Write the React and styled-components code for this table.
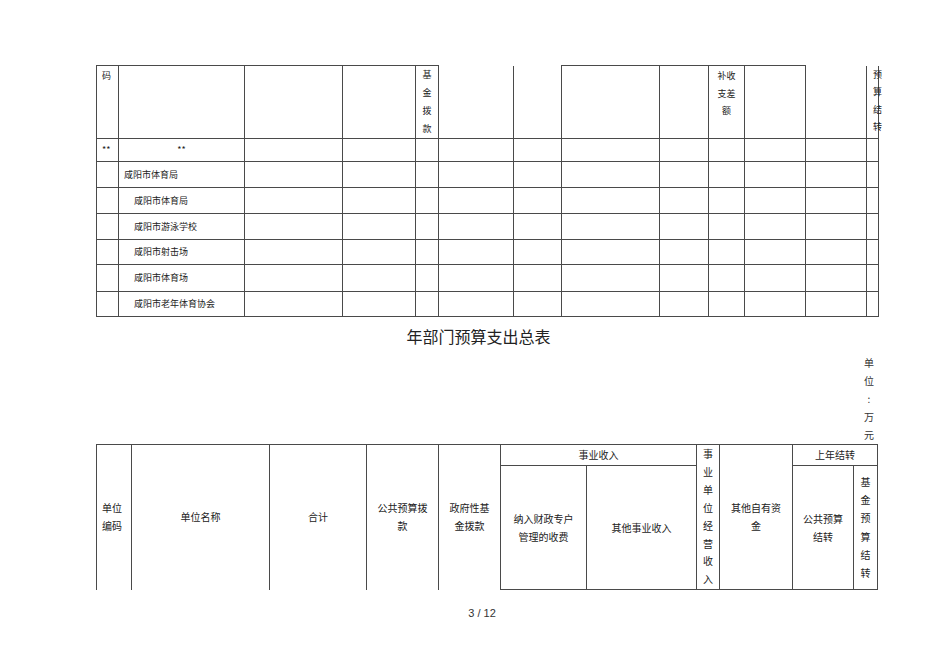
import React from "react";
import styled, { createGlobalStyle } from "styled-components";

const GlobalStyle = createGlobalStyle`
  html, body {
    margin: 0;
    padding: 0;
    background: #fff;
  }
  body {
    font-family: "Noto Sans CJK SC", "Liberation Sans", sans-serif;
    color: #222;
  }
`;

//page layout
const Page = styled.div`
  width: 950px;
  height: 672px;
  box-sizing: border-box;
  padding: 65px 0 0 96px;
  background: #fff;
`;

const Content = styled.div`
  width: 782px;
  display: flex;
  flex-direction: column;
`;

//tables
const Sheet = styled.table`
  border-collapse: collapse;
  table-layout: fixed;
  width: ${(p) => p.$w}px;
  font-size: ${(p) => p.$size}px;
  color: #222;
`;

const Col = styled.col`
  width: ${(p) => p.$w}px;
`;

const Row = styled.tr`
  height: ${(p) => p.$h}px;
`;

const Cell = styled.td`
  border: 1px solid #4a4a4a;
  border-top: ${(p) => (p.$noTop ? "none" : "1px solid #4a4a4a")};
  border-bottom: ${(p) => (p.$noBottom ? "none" : "1px solid #4a4a4a")};
  padding: ${(p) => p.$pad || "0"};
  text-align: ${(p) => p.$align || "center"};
  vertical-align: ${(p) => p.$valign || "middle"};
  line-height: ${(p) => p.$lh || 18}px;
  white-space: nowrap;
  overflow: visible;
`;

const Title = styled.div`
  margin-top: 9px;
  padding-right: 17px;
  text-align: center;
  font-size: 16px;
  line-height: 20px;
  color: #222;
`;

const Unit = styled.div`
  margin-top: 8px;
  margin-left: 768px;
  width: 10px;
  font-size: 10px;
  line-height: 18px;
  text-align: center;
  color: #333;
`;

const PageNo = styled.div`
  margin-top: 16px;
  padding-right: 10px;
  text-align: center;
  font-family: "Liberation Sans", sans-serif;
  font-size: 11px;
  line-height: 14px;
  color: #333;
`;

const stack = (text) =>
  text.split("").map((ch, i) => (
    <React.Fragment key={i}>
      {i > 0 && <br />}
      {ch}
    </React.Fragment>
  ));

const topCols = [22, 126, 98, 73, 23, 75, 48, 98, 49, 36, 61, 61, 12];
const bottomCols = [35, 138, 97, 72, 62, 86, 110, 23, 73, 61, 24];

const units = [
  { name: "咸阳市体育局", pad: "0 0 0 5px", h: 26 },
  { name: "咸阳市体育局", pad: "0 0 0 15px", h: 26 },
  { name: "咸阳市游泳学校", pad: "0 0 0 15px", h: 26 },
  { name: "咸阳市射击场", pad: "0 0 0 15px", h: 25 },
  { name: "咸阳市体育场", pad: "0 0 0 15px", h: 27 },
  { name: "咸阳市老年体育协会", pad: "0 0 0 15px", h: 25 },
];

function TopTable() {
  return (
    <Sheet $w={782} $size={9}>
      <colgroup>
        {topCols.map((w, i) => (
          <Col key={i} $w={w} />
        ))}
      </colgroup>
      <tbody>
        <Row $h={73}>
          <Cell $align="left" $valign="top" $pad="1px 0 0 5px">
            码
          </Cell>
          <Cell />
          <Cell />
          <Cell />
          <Cell $valign="top" $lh={18}>
            {stack("基金拨款")}
          </Cell>
          <Cell $noTop />
          <Cell $noTop />
          <Cell />
          <Cell />
          <Cell $valign="top" $pad="1px 0 0 0" $lh={17.5}>
            补收
            <br />
            支差
            <br />额
          </Cell>
          <Cell />
          <Cell $noTop />
          <Cell $noTop $valign="top" $align="left" $pad="0 0 0 6px" $lh={17.5}>
            {stack("预算结转")}
          </Cell>
        </Row>
        <Row $h={23}>
          <Cell $align="left" $pad="0 0 0 5px">
            **
          </Cell>
          <Cell>**</Cell>
          {topCols.slice(2).map((_, i) => (
            <Cell key={i} />
          ))}
        </Row>
        {units.map((u, r) => (
          <Row key={r} $h={u.h}>
            <Cell />
            <Cell $align="left" $pad={u.pad}>
              {u.name}
            </Cell>
            {topCols.slice(2).map((_, i) => (
              <Cell key={i} />
            ))}
          </Row>
        ))}
      </tbody>
    </Sheet>
  );
}

function BottomTable() {
  return (
    <Sheet $w={781} $size={10}>
      <colgroup>
        {bottomCols.map((w, i) => (
          <Col key={i} $w={w} />
        ))}
      </colgroup>
      <tbody>
        <Row $h={21}>
          <Cell rowSpan={2} $noBottom $align="left" $pad="0 0 0 5px">
            单位
            <br />
            编码
          </Cell>
          <Cell rowSpan={2} $noBottom>
            单位名称
          </Cell>
          <Cell rowSpan={2} $noBottom>
            合计
          </Cell>
          <Cell rowSpan={2} $noBottom>
            公共预算拨
            <br />款
          </Cell>
          <Cell rowSpan={2} $noBottom>
            政府性基
            <br />
            金拨款
          </Cell>
          <Cell colSpan={2}>事业收入</Cell>
          <Cell rowSpan={2} $valign="top" $lh={17.9}>
            {stack("事业单位经营收入")}
          </Cell>
          <Cell rowSpan={2}>
            其他自有资
            <br />金
          </Cell>
          <Cell colSpan={2}>上年结转</Cell>
        </Row>
        <Row $h={124}>
          <Cell>
            纳入财政专户
            <br />
            管理的收费
          </Cell>
          <Cell>其他事业收入</Cell>
          <Cell>
            公共预算
            <br />
            结转
          </Cell>
          <Cell $lh={18.3}>{stack("基金预算结转")}</Cell>
        </Row>
      </tbody>
    </Sheet>
  );
}

export default function App() {
  return (
    <>
      <GlobalStyle />
      <Page>
        <Content>
          <TopTable />
          <Title>年部门预算支出总表</Title>
          <Unit>{stack("单位:万元")}</Unit>
          <BottomTable />
          <PageNo>3 / 12</PageNo>
        </Content>
      </Page>
    </>
  );
}
